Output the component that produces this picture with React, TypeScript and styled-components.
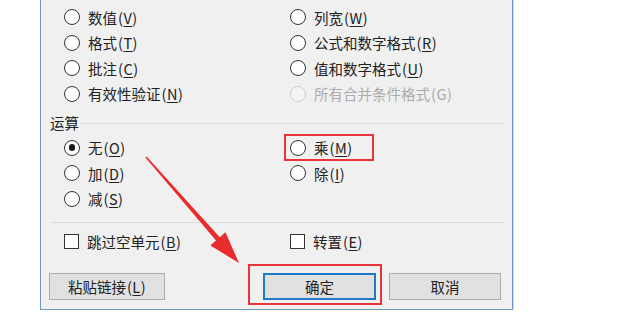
import styled, { createGlobalStyle, css } from 'styled-components'

const GlobalStyle = createGlobalStyle`
  html, body {
    margin: 0;
    padding: 0;
    background: #ffffff;
  }
  body {
    font-family: "Noto Sans CJK SC", "DejaVu Sans", sans-serif;
  }
`

const Page = styled.div`
  position: relative;
  width: 620px;
  height: 313px;
  overflow: hidden;
  padding-left: 40px;
  box-sizing: border-box;
`

const Dialog = styled.div`
  width: 473px;
  margin-top: -21px;
  box-sizing: border-box;
  background: #f0f0f0;
  border: 1px solid #6c98c6;
  border-top: none;
  padding-bottom: 9px;
  box-shadow: 1px 0 0 #c9dcef;
  color: #222222;
  font-size: 14.5px;
`

const OptionGrid = styled.div<{ $top?: number }>`
  display: grid;
  grid-template-columns: 226px 1fr;
  grid-auto-rows: 25.5px;
  padding-left: 23px;
  margin-top: ${({ $top }) => $top ?? 0}px;
`

const Option = styled.label<{ $disabled?: boolean; $marked?: boolean }>`
  position: relative;
  display: flex;
  align-items: center;
  gap: 8px;
  justify-self: start;
  white-space: nowrap;
  color: ${({ $disabled }) => ($disabled ? '#ababab' : '#222222')};
  ${({ $marked }) =>
    $marked &&
    css`
      &::after {
        content: '';
        position: absolute;
        left: -6px;
        top: -1px;
        width: 86px;
        height: 23px;
        border: 2px solid #e8343a;
      }
    `}
`

const Radio = styled.span<{ $checked?: boolean; $disabled?: boolean }>`
  position: relative;
  width: 16px;
  height: 16px;
  box-sizing: border-box;
  border-radius: 50%;
  border: 1.4px solid ${({ $disabled }) => ($disabled ? '#cfcfcf' : '#333333')};
  background: ${({ $disabled }) => ($disabled ? '#f4f4f4' : '#ffffff')};
  flex: none;
  ${({ $checked }) =>
    $checked &&
    css`
      &::after {
        content: '';
        position: absolute;
        left: 3.6px;
        top: 3.6px;
        width: 6.4px;
        height: 6.4px;
        border-radius: 50%;
        background: #1a1a1a;
      }
    `}
`

const Key = styled.span`
  letter-spacing: 0.5px;
  margin-left: 1px;
  u {
    text-underline-offset: 2px;
  }
`

const SectionHeader = styled.div`
  display: flex;
  align-items: center;
  gap: 2px;
  height: 20px;
  margin-top: 5.5px;
  padding: 0 7px 0 9px;
`

const Rule = styled.div`
  flex: 1;
  height: 1px;
  background: #dcdcdc;
  margin-top: 2px;
`

const Separator = styled.div`
  height: 1px;
  background: #dcdcdc;
  margin: 10px 7px 0 9px;
`

const CheckRow = styled.div`
  display: grid;
  grid-template-columns: 226px 1fr;
  height: 20px;
  margin-top: 8px;
  padding-left: 23px;
`

const CheckItem = styled.label`
  display: flex;
  align-items: center;
  gap: 8px;
  white-space: nowrap;
`

const CheckBox = styled.span`
  width: 15px;
  height: 15px;
  box-sizing: border-box;
  border: 1.4px solid #333333;
  background: #ffffff;
  flex: none;
`

const ButtonRow = styled.div`
  display: flex;
  align-items: center;
  margin-top: 22px;
  padding-left: 8px;
`

const Button = styled.div<{ $width: number; $gap?: number; $focused?: boolean }>`
  position: relative;
  display: flex;
  align-items: center;
  justify-content: center;
  width: ${({ $width }) => $width}px;
  height: 27px;
  margin-left: ${({ $gap }) => $gap ?? 0}px;
  box-sizing: border-box;
  background: #e1e1e1;
  border: 1px solid #adadad;
  color: #222222;
  ${({ $focused }) =>
    $focused &&
    css`
      border: 2px solid #1f78c8;
      &::after {
        content: '';
        position: absolute;
        left: -17px;
        top: -11px;
        width: 130px;
        height: 37px;
        border: 2px solid #e8343a;
      }
    `}
`

const Annotation = styled.svg`
  position: absolute;
  left: 0;
  top: 0;
  pointer-events: none;
`

const label = (text: string, key: string) => (
  <span>
    {text}
    <Key>
      (<u>{key}</u>)
    </Key>
  </span>
)

// the first row ("公式" / "边框除外") is scrolled out of view: only its radios peek in
const pasteOptions: [string, string, string, string, boolean?][] = [
  ['', '', '', ''],
  ['数值', 'V', '列宽', 'W'],
  ['格式', 'T', '公式和数字格式', 'R'],
  ['批注', 'C', '值和数字格式', 'U'],
  ['有效性验证', 'N', '所有合并条件格式', 'G', true],
]

export default function App() {
  return (
    <Page>
      <GlobalStyle />
      <Dialog>
        <OptionGrid>
          {pasteOptions.map(([l, lk, r, rk, disabled], i) => [
            <Option key={`l${i}`}>
              <Radio />
              {l && label(l, lk)}
            </Option>,
            <Option key={`r${i}`} $disabled={disabled}>
              <Radio $disabled={disabled} />
              {disabled ? (
                <span>
                  {r}
                  <Key>({rk})</Key>
                </span>
              ) : (
                r && label(r, rk)
              )}
            </Option>,
          ])}
        </OptionGrid>

        <SectionHeader>
          <span>运算</span>
          <Rule />
        </SectionHeader>

        <OptionGrid $top={3}>
          <Option>
            <Radio $checked />
            {label('无', 'O')}
          </Option>
          <Option $marked>
            <Radio />
            {label('乘', 'M')}
          </Option>
          <Option>
            <Radio />
            {label('加', 'D')}
          </Option>
          <Option>
            <Radio />
            {label('除', 'I')}
          </Option>
          <Option>
            <Radio />
            {label('减', 'S')}
          </Option>
        </OptionGrid>

        <Separator />

        <CheckRow>
          <CheckItem>
            <CheckBox />
            {label('跳过空单元', 'B')}
          </CheckItem>
          <CheckItem>
            <CheckBox />
            {label('转置', 'E')}
          </CheckItem>
        </CheckRow>

        <ButtonRow>
          <Button $width={116}>{label('粘贴链接', 'L')}</Button>
          <Button $width={113} $gap={98} $focused>
            确定
          </Button>
          <Button $width={112} $gap={13}>
            取消
          </Button>
        </ButtonRow>
      </Dialog>

      <Annotation width="620" height="313" viewBox="0 0 620 313">
        <polygon
          fill="#ea2b2e"
          points="146.6,156.5 219.8,237.2 225.4,232.3 239,263 210.4,245.5 216,240.6 145.4,157.5"
        />
      </Annotation>
    </Page>
  )
}
